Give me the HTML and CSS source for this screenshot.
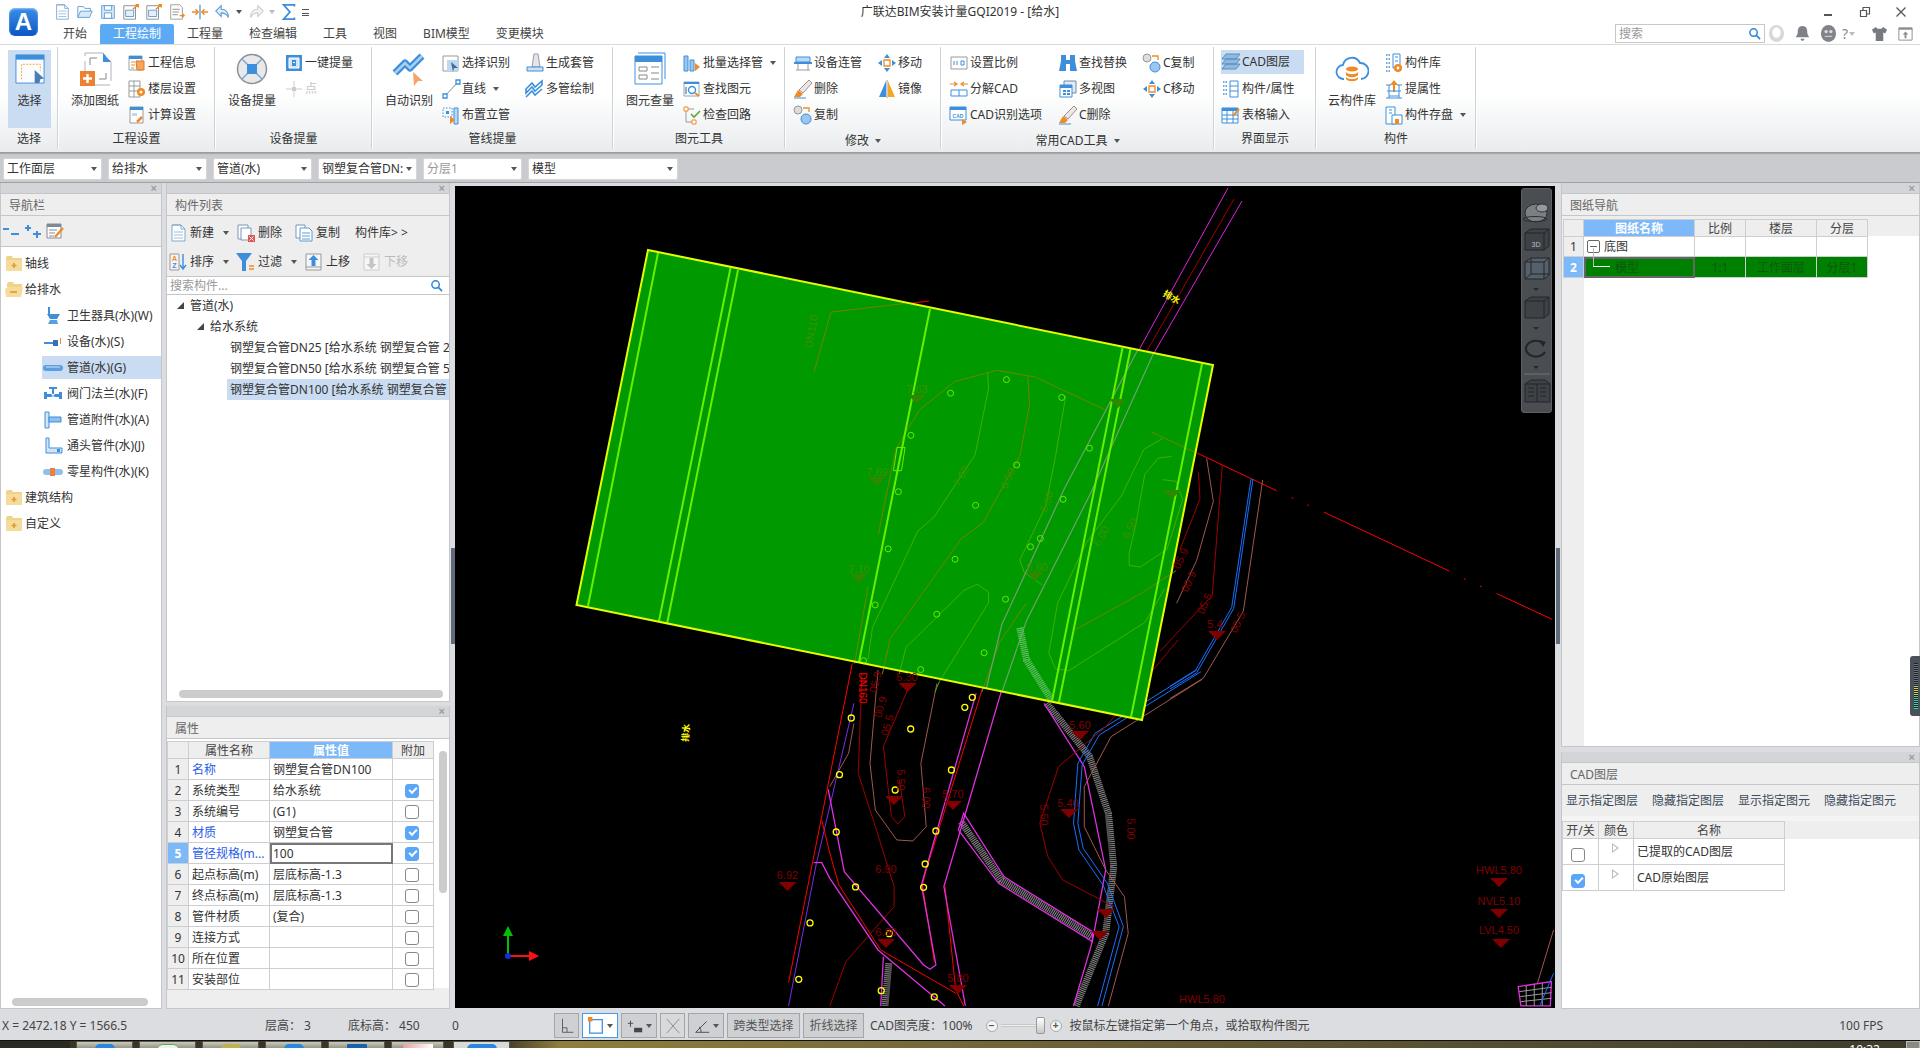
FILE: index.html
```html
<!DOCTYPE html>
<html lang="zh-CN">
<head>
<meta charset="utf-8">
<title>广联达BIM安装计量GQI2019 - [给水]</title>
<link rel="stylesheet" href="styles.css">
</head>
<body>
<svg class="defs" width="0" height="0" aria-hidden="true">
<defs>
<symbol id="i-new" viewBox="0 0 20 20"><path d="M4 2h9l4 4v12H4z" fill="#fff" stroke="#7fa9cf"/><path d="M4 2h9v4h4" fill="none" stroke="#7fa9cf"/><path d="M6 9h9M6 12h9M6 15h9" stroke="#9ac0e0"/></symbol>
<symbol id="i-open" viewBox="0 0 20 20"><path d="M2 16V4h6l2 2h6v3" fill="#fff" stroke="#5b9bd5"/><path d="M2 16l3-7h13l-3 7z" fill="#d8e9f7" stroke="#5b9bd5"/></symbol>
<symbol id="i-save" viewBox="0 0 20 20"><path d="M3 3h14v14H3z" fill="#dcebf8" stroke="#5b9bd5"/><path d="M6 3h8v5H6zM6 11h8v6H6z" fill="#fff" stroke="#5b9bd5"/></symbol>
<symbol id="i-export" viewBox="0 0 20 20"><path d="M2 3h13v15H2z" fill="#fff" stroke="#888"/><path d="M4 8h9v7H4z" fill="#e6eef6" stroke="#5b9bd5"/><path d="M12 7l6-5M15 2h3v3" fill="none" stroke="#f08a24" stroke-width="1.6"/></symbol>
<symbol id="i-ifc" viewBox="0 0 20 20"><path d="M3 2h10l3 3v13H3z" fill="#fff" stroke="#999"/><path d="M5 7h8M5 10h7M5 13h6" stroke="#888"/><path d="M13 14h5M16 12l2 2-2 2" fill="none" stroke="#f08a24" stroke-width="1.4"/></symbol>
<symbol id="i-split" viewBox="0 0 20 20"><path d="M10 2v16" stroke="#5b9bd5" stroke-width="1.5"/><path d="M1 10h6M5 7l3 3-3 3M19 10h-6M15 7l-3 3 3 3" fill="none" stroke="#f08a24" stroke-width="1.5"/></symbol>
<symbol id="i-undo" viewBox="0 0 20 20"><path d="M8 3L2 9l6 6v-4c4 0 6 1 8 5 0-6-3-9-8-9z" fill="#e3eff9" stroke="#5b9bd5" stroke-width="1.2"/></symbol>
<symbol id="i-redo" viewBox="0 0 20 20"><path d="M12 3l6 6-6 6v-4c-4 0-6 1-8 5 0-6 3-9 8-9z" fill="#f4f4f4" stroke="#ccc" stroke-width="1.2"/></symbol>
<symbol id="i-sum" viewBox="0 0 20 20"><path d="M16 4V2H4l7 8-7 8h12v-2" fill="none" stroke="#3d8fdc" stroke-width="2"/></symbol>
<symbol id="i-info" viewBox="0 0 20 20"><path d="M2 3h13v14H2z" fill="#fff" stroke="#8aa"/><path d="M2 3h13v3H2z" fill="#3d8fdc"/><path d="M4 9h4M4 12h4M4 15h3" stroke="#f08a24"/><path d="M9 8h8v9h-7z" fill="#f6a55c" stroke="#e2761d"/></symbol>
<symbol id="i-floor" viewBox="0 0 20 20"><path d="M2 2h11v16H2z" fill="#fff" stroke="#999"/><path d="M2 7h11M2 12h11M7 2v16" stroke="#999"/><circle cx="14" cy="13" r="4" fill="#f08a24"/><circle cx="14" cy="13" r="1.5" fill="#fff"/></symbol>
<symbol id="i-calc" viewBox="0 0 20 20"><path d="M3 2h13v16H3z" fill="#fff" stroke="#999"/><path d="M3 2h13v3H3z" fill="#3d8fdc"/><path d="M5 8h5v3H5z" fill="#bcd8f2"/><path d="M10 17l5-5" stroke="#f08a24" stroke-width="2.5"/></symbol>
<symbol id="i-one" viewBox="0 0 20 20"><path d="M2 2h16v16H2z" fill="#3d8fdc"/><path d="M5 5h10v10H5z" fill="#cfe4f7" stroke="#fff"/><path d="M8 7h4v6H8z" fill="#3d8fdc"/><path d="M9 9h2v1H9z" fill="#fff"/></symbol>
<symbol id="i-point" viewBox="0 0 20 20"><path d="M10 2v5M10 13v5M2 10h5M13 10h5" stroke="#ddd" stroke-width="1.4"/><circle cx="10" cy="10" r="2.5" fill="#ccc"/></symbol>
<symbol id="i-pick" viewBox="0 0 20 20"><path d="M2 3h15v15H2z" fill="#fff" stroke="#999"/><path d="M6 7h11v11H6z" fill="#bcd8f2"/><path d="M10 9l7 6-4 0-1 4z" fill="#456a96"/></symbol>
<symbol id="i-line" viewBox="0 0 20 20"><path d="M4 17L17 3" stroke="#888"/><path d="M2 15h4v4H2zM15 1h4v4h-4z" fill="#fff" stroke="#3d8fdc" stroke-width="1.3"/></symbol>
<symbol id="i-riser" viewBox="0 0 20 20"><path d="M2 3h9v9H2z" fill="none" stroke="#3d8fdc" stroke-dasharray="1.5 1.5"/><path d="M5 6h3v3H5z" fill="#3d8fdc"/><path d="M13 3h4v16h-4z" fill="#bcd8f2" stroke="#3d8fdc"/><path d="M9 11l5 4-5 4z" fill="#f08a24"/></symbol>
<symbol id="i-sleeve" viewBox="0 0 20 20"><path d="M9 1h4l2 13H7z" fill="#e4e6e8" stroke="#99a"/><path d="M2 14h16v4H2z" fill="#cfe0f0" stroke="#3d8fdc"/></symbol>
<symbol id="i-multi" viewBox="0 0 20 20"><path d="M1 10l6-6 3 4 7-6v4l-7 6-3-4-6 6zM1 18l6-6 3 4 7-6" fill="none" stroke="#3d8fdc" stroke-width="1.6"/></symbol>
<symbol id="i-batch" viewBox="0 0 20 20"><path d="M2 3h4v15H2zM8 7h4v11H8z" fill="#9cc6ee" stroke="#3d8fdc"/><path d="M13 10l5 4-5 4z" fill="#f08a24"/></symbol>
<symbol id="i-find" viewBox="0 0 20 20"><path d="M2 3h15v14H2z" fill="#fff" stroke="#8ab"/><path d="M2 3h15v2H2z" fill="#3d8fdc"/><circle cx="10" cy="11" r="3.5" fill="none" stroke="#3d8fdc" stroke-width="1.4"/><path d="M13 14l4 3" stroke="#f08a24" stroke-width="2"/><path d="M4 8v7" stroke="#9ac" stroke-width="2"/></symbol>
<symbol id="i-loop" viewBox="0 0 20 20"><path d="M4 4h8M4 4v13h6" fill="none" stroke="#999"/><path d="M2 2h4v4H2zM10 15h4v4h-4z" fill="#fff" stroke="#f08a24"/><path d="M9 9l3 3 6-6" fill="none" stroke="#5aa83a" stroke-width="1.6"/></symbol>
<symbol id="i-conn" viewBox="0 0 20 20"><path d="M3 4h14v5H3z" fill="#bcd8f2" stroke="#3d8fdc"/><path d="M1 9h18v2H1z" fill="#3d8fdc"/><path d="M5 11v6M15 11v6M3 17h14" fill="none" stroke="#99a"/></symbol>
<symbol id="i-brush" viewBox="0 0 20 20"><path d="M16 1l3 3-9 10-4-3z" fill="#e8e8e8" stroke="#a88"/><path d="M5 11l5 4-3 3H1z" fill="#f08a24"/><path d="M1 19h12" stroke="#3d8fdc"/></symbol>
<symbol id="i-copy" viewBox="0 0 20 20"><circle cx="5" cy="5" r="4" fill="#ddd" stroke="#999"/><circle cx="13" cy="14" r="5" fill="#9cc6ee" stroke="#3d8fdc"/><path d="M10 3h6v4" fill="none" stroke="#f08a24" stroke-width="1.3"/></symbol>
<symbol id="i-move" viewBox="0 0 20 20"><path d="M10 1l3 4H7zM10 19l3-4H7zM1 10l4-3v6zM19 10l-4-3v6z" fill="#3d8fdc"/><path d="M7 7h6v6H7z" fill="#fff" stroke="#f08a24" stroke-width="1.3"/></symbol>
<symbol id="i-mirror" viewBox="0 0 20 20"><path d="M9 2v16H2z" fill="#3d8fdc"/><path d="M11 2v16h7z" fill="#f5a623"/><path d="M10 1v18" stroke="#999"/></symbol>
<symbol id="i-scale" viewBox="0 0 20 20"><path d="M2 4h16v12H2z" fill="#fff" stroke="#999"/><path d="M5 8v4M8 8v4M12 8h3v4h-3z" fill="none" stroke="#3d8fdc"/></symbol>
<symbol id="i-explode" viewBox="0 0 20 20"><path d="M1 5h7M5 3L8 5 5 7M19 5h-7M15 3l-3 2 3 2" fill="none" stroke="#f08a24" stroke-width="1.2"/><path d="M2 11h16M2 11v6h16v-6M10 11v6" fill="#fff" stroke="#3d8fdc"/></symbol>
<symbol id="i-cad" viewBox="0 0 20 20"><path d="M1 2h16v13H1z" fill="#fff" stroke="#3d8fdc"/><path d="M1 2h16v3H1z" fill="#3d8fdc"/><text x="9" y="13" class="icon-text" text-anchor="middle">CAD</text><path d="M13 14l5 3-5 3z" fill="#f08a24"/></symbol>
<symbol id="i-bino" viewBox="0 0 20 20"><path d="M3 2h5v5h4V2h5v6l2 10h-7V11H8v7H1L3 8z" fill="#3d8fdc"/></symbol>
<symbol id="i-views" viewBox="0 0 20 20"><path d="M6 2h12v12H6z" fill="#dcebf8" stroke="#789"/><path d="M2 6h12v12H2z" fill="#fff" stroke="#3d8fdc"/><path d="M2 6h12v3H2z" fill="#3d8fdc"/><path d="M5 11h3v2H5zM9 11h3v2H9zM5 14h3v2H5zM9 14h3v2H9z" fill="#3d8fdc"/></symbol>
<symbol id="i-layers" viewBox="0 0 20 20"><path d="M5 2h14l-4 5H1zM5 7h14l-4 5H1zM5 12h14l-4 5H1z" fill="#8fb9de" stroke="#5b8ec0"/></symbol>
<symbol id="i-props" viewBox="0 0 20 20"><path d="M9 2h8v16H9z" fill="#fff" stroke="#3d8fdc"/><path d="M9 7h8M9 12h8" stroke="#3d8fdc"/><path d="M2 3h4M2 7h4M2 11h4M2 15h4" stroke="#3d8fdc" stroke-width="1.5" stroke-dasharray="1.5 1"/></symbol>
<symbol id="i-table" viewBox="0 0 20 20"><path d="M1 3h16v15H1z" fill="#fff" stroke="#3d8fdc"/><path d="M1 3h16v3H1z" fill="#3d8fdc"/><path d="M1 10h16M1 14h16M6 3v15M12 3v15" stroke="#3d8fdc"/><path d="M12 11l6-7" stroke="#f08a24" stroke-width="2"/></symbol>
<symbol id="i-lib" viewBox="0 0 20 20"><path d="M9 1h7v14H9z" fill="#fff" stroke="#3d8fdc"/><path d="M11 4h3M11 8h3" stroke="#3d8fdc"/><path d="M2 2h4M2 6h4M2 10h4M2 14h4M2 18h4" stroke="#3d8fdc" stroke-width="1.5" stroke-dasharray="1.5 1"/><circle cx="14" cy="15" r="4" fill="#f08a24"/><circle cx="14" cy="15" r="1.4" fill="#fff"/></symbol>
<symbol id="i-extract" viewBox="0 0 20 20"><path d="M10 1l4 5h-3v7H9V6H6z" fill="#f08a24"/><path d="M2 6h5M13 6h5M3 12h14M5 17h10M2 19h16" stroke="#3d8fdc"/><path d="M5 6v13M15 6v13" stroke="#3d8fdc"/></symbol>
<symbol id="i-store" viewBox="0 0 20 20"><path d="M2 2h9v17H2z" fill="#fff" stroke="#3d8fdc"/><path d="M5 5h3M5 8h3" stroke="#3d8fdc"/><path d="M8 10h10v9H8z" fill="#fff" stroke="#3d8fdc"/><path d="M11 14h4v5h-4z" fill="#f08a24"/></symbol>
<symbol id="i-folder-c" viewBox="0 0 20 20"><path d="M2 4l1-2h5l1 2h9v13H2z" fill="#f2d28a"/><path d="M2 6h16v11H2z" fill="#f6dc9c"/><path d="M10 9v5M7.500 11.500h5" stroke="#e09a33" stroke-width="1.6"/></symbol>
<symbol id="i-folder-o" viewBox="0 0 20 20"><path d="M3 4l1-2h5l1 2h8v3H3z" fill="#f2d28a"/><path d="M4 7h15l-2 10H2L1 9z" fill="#f6dc9c"/><path d="M6 12h7" stroke="#e09a33" stroke-width="1.6"/></symbol>
<symbol id="n-san" viewBox="0 0 20 20"><path d="M5 1h2v7H5z" fill="#3d8fdc"/><path d="M4 8h13l-3 5h-7z" fill="#3d8fdc"/><path d="M7 14h7l1 4H5z" fill="#5a9fe0"/></symbol>
<symbol id="n-dev" viewBox="0 0 20 20"><path d="M1 10h13v2H1z" fill="#3d8fdc"/><path d="M10 8h5v6h-5z" fill="#3a6fb0"/><path d="M17 6v6h1V6z" fill="#f08a24"/></symbol>
<symbol id="n-pipe" viewBox="0 0 20 20"><path d="M3 7h14a3 3 0 0 1 0 6H3a3 3 0 0 1 0-6z" fill="#5a9fe0"/><path d="M3 9h14" stroke="#cfe4f7"/></symbol>
<symbol id="n-valve" viewBox="0 0 20 20"><path d="M1 8h3v7H1zM16 8h3v7h-3z" fill="#3d8fdc"/><path d="M4 10h4l2 2 2-2h4v3h-4l-2-1-2 1H4z" fill="#3d8fdc"/><path d="M6 3h8v2h-3v5H9V5H6z" fill="#3d8fdc"/></symbol>
<symbol id="n-attach" viewBox="0 0 20 20"><path d="M2 2h4v16H2z" fill="#d3e6f7" stroke="#3d8fdc"/><path d="M6 7h12v5H6z" fill="#8fbfea" stroke="#3d8fdc"/></symbol>
<symbol id="n-tee" viewBox="0 0 20 20"><path d="M3 2h3v10h13v5H3z" fill="#d3e6f7" stroke="#3d8fdc"/><path d="M14 13h3v3h-3z" fill="#3d8fdc"/></symbol>
<symbol id="n-misc" viewBox="0 0 20 20"><path d="M3 7h14a3 3 0 0 1 0 6H3a3 3 0 0 1 0-6z" fill="#8fbfea"/><path d="M7 6h5v8H7z" fill="#e8823c"/></symbol>
<symbol id="l-del" viewBox="0 0 20 20"><path d="M2 2h10v14H2z" fill="#fff" stroke="#7a98b8"/><path d="M5 5h10v12H5z" fill="#fff" stroke="#7a98b8"/><path d="M12 12h7v7h-7z" fill="#e05454"/><path d="M13.500 13.500l4 4M17.500 13.500l-4 4" stroke="#fff"/></symbol>
<symbol id="l-copy" viewBox="0 0 20 20"><path d="M2 2h9v13H2z" fill="#fff" stroke="#7a98b8"/><path d="M6 5h9l3 3v10H6z" fill="#fff" stroke="#5b9bd5"/><path d="M8 10h8M8 13h8M8 16h8" stroke="#5b9bd5"/></symbol>
<symbol id="l-sort" viewBox="0 0 20 20"><path d="M2 2h9v16H2z" fill="#f4f4f4" stroke="#999"/><text x="6.500" y="9" class="icon-text-o" text-anchor="middle">A</text><text x="6.500" y="16" class="icon-text-b" text-anchor="middle">Z</text><path d="M15 2v14M12 13l3 4 3-4" fill="none" stroke="#3d8fdc" stroke-width="1.4"/></symbol>
<symbol id="l-filter" viewBox="0 0 20 20"><path d="M0 1h16l-6 8v10H6V9z" fill="#3d8fdc"/><path d="M13 14h5M13 17h5" stroke="#f08a24" stroke-width="1.3"/></symbol>
<symbol id="l-up" viewBox="0 0 20 20"><path d="M2 2h15v16H2z" fill="#f6f6f6" stroke="#999"/><path d="M9.500 3l5 5h-3v6h-4V8h-3z" fill="#3d8fdc"/><path d="M2 15h15" stroke="#999"/></symbol>
<symbol id="l-down" viewBox="0 0 20 20"><path d="M2 2h15v16H2z" fill="#f6f6f6" stroke="#ccc"/><path d="M9.500 17l5-5h-3V6h-4v6h-3z" fill="#c4c4c4"/><path d="M2 5h15" stroke="#ccc"/></symbol>
</defs>
</svg>

<div class="app">
  <header class="top">
    <div class="logo"><span>A</span></div>
    <div class="title-row">
      <div class="qat">
        <svg class="ic q"><use href="#i-new"/></svg>
        <svg class="ic q"><use href="#i-open"/></svg>
        <svg class="ic q"><use href="#i-save"/></svg>
        <svg class="ic q"><use href="#i-export"/></svg>
        <svg class="ic q"><use href="#i-export"/></svg>
        <svg class="ic q"><use href="#i-ifc"/></svg>
        <svg class="ic q"><use href="#i-split"/></svg>
        <svg class="ic q"><use href="#i-undo"/></svg>
        <i class="caret qc"></i>
        <svg class="ic q"><use href="#i-redo"/></svg>
        <i class="caret qc dim"></i>
        <svg class="ic q"><use href="#i-sum"/></svg>
        <span class="qmore"></span>
      </div>
      <div class="app-title">广联达BIM安装计量GQI2019 - [给水]</div>
      <div class="winctl">
        <svg class="wbtn" viewBox="0 0 12 12"><path d="M1 8h8v2H1z" fill="#555"/></svg>
        <svg class="wbtn" viewBox="0 0 12 12"><path d="M1.500 4.500h6v6h-6zM4 4V1.500h6.500V8H8" fill="none" stroke="#555" stroke-width="1.2"/></svg>
        <svg class="wbtn" viewBox="0 0 12 12"><path d="M1.500 1.500l9 9M10.500 1.500l-9 9" stroke="#555" stroke-width="1.3"/></svg>
      </div>
    </div>
    <nav class="tab-row">
      <span class="tab">开始</span>
      <span class="tab active">工程绘制</span>
      <span class="tab">工程量</span>
      <span class="tab">检查编辑</span>
      <span class="tab">工具</span>
      <span class="tab">视图</span>
      <span class="tab">BIM模型</span>
      <span class="tab">变更模块</span>
      <div class="top-right">
        <div class="top-search"><span>搜索</span><svg class="mag" viewBox="0 0 14 14"><circle cx="6" cy="6" r="4" fill="none" stroke="#2a86d8" stroke-width="1.6"/><path d="M9 9l4 4" stroke="#2a86d8" stroke-width="1.8"/></svg></div>
        <div class="top-icons">
          <svg class="ti" viewBox="0 0 18 18"><ellipse cx="9" cy="9" rx="8" ry="9" fill="#d8d8d8"/><ellipse cx="9" cy="8" rx="4.500" ry="5.500" fill="#fff"/></svg>
          <svg class="ti" viewBox="0 0 18 18"><path d="M9 1c-4 0-5 3-5 6 0 4-2 5-2 6h14c0-1-2-2-2-6 0-3-1-6-5-6zM7 14.500h4c0 3-4 3-4 0z" fill="#7f8388"/></svg>
          <svg class="ti" viewBox="0 0 18 18"><ellipse cx="9" cy="9" rx="8" ry="9" fill="#80848a"/><circle cx="6.500" cy="7" r="1.800" fill="#ddd"/><circle cx="11.500" cy="7" r="1.800" fill="#ddd"/><path d="M5 12h8" stroke="#ddd"/></svg>
          <span class="help">?<i class="caret dim"></i></span>
          <svg class="ti shirt" viewBox="0 0 18 18"><path d="M5 2L1 5l2 4 2-1v9h8V8l2 1 2-4-4-3-2 2H7z" fill="#777b80"/></svg>
          <svg class="ti" viewBox="0 0 18 18"><path d="M2 3h14v13H2z" fill="#fff" stroke="#8a8e92"/><path d="M2 3h14v2H2z" fill="#8a8e92"/><path d="M9 7l3 3h-2v4H8v-4H6z" fill="#8a8e92"/></svg>
        </div>
      </div>
    </nav>
  </header>

  <section class="ribbon">
    <div class="group g1">
      <div class="group-body">
        <div class="big sel-big">
          <svg class="bigic" viewBox="0 0 32 32"><path d="M1 1h30v30H1z" fill="#fafcff" stroke="#3d8fdc"/><path d="M1 1h30v5H1z" fill="#3d8fdc"/><path d="M7 27V11h20v7" fill="none" stroke="#f5a623" stroke-dasharray="2 1.500"/><path d="M21 17l10 9-4 1-1 4h-5z" fill="#4c7db2"/></svg>
          <span>选择</span>
        </div>
      </div>
      <div class="group-label">选择</div>
    </div>
    <div class="group g2">
      <div class="group-body">
        <div class="big">
          <svg class="bigic" viewBox="0 0 34 34"><path d="M7 1h18l8 9v23H7z" fill="#fff" stroke="#a9b4c0" stroke-dasharray="22 5"/><path d="M25 1l8 9h-8z" fill="#3d8fdc"/><path d="M12 6v7M12 6h7M28 27h-7M28 27v-6" fill="none" stroke="#888"/><path d="M2 19h15v15H2z" fill="#ee8032"/><path d="M9.500 22v9M5 26.500h9" stroke="#fff" stroke-width="2.400"/></svg>
          <span>添加图纸</span>
        </div>
        <div class="col">
          <div class="item"><svg class="ic"><use href="#i-info"/></svg>工程信息</div>
          <div class="item"><svg class="ic"><use href="#i-floor"/></svg>楼层设置</div>
          <div class="item"><svg class="ic"><use href="#i-calc"/></svg>计算设置</div>
        </div>
      </div>
      <div class="group-label">工程设置</div>
    </div>
    <div class="group g3">
      <div class="group-body">
        <div class="big">
          <svg class="bigic" viewBox="0 0 34 34"><circle cx="17" cy="17" r="14.500" fill="#e8e9ea" stroke="#8e9296" stroke-width="1.500"/><path d="M7 7l20 20M27 7L7 27" stroke="#7ea9d2" stroke-width="1.500"/><path d="M12 12h10v10H12z" fill="#3d8fdc"/></svg>
          <span>设备提量</span>
        </div>
        <div class="col">
          <div class="item"><svg class="ic"><use href="#i-one"/></svg>一键提量</div>
          <div class="item off"><svg class="ic"><use href="#i-point"/></svg>点</div>
        </div>
      </div>
      <div class="group-label">设备提量</div>
    </div>
    <div class="group g4">
      <div class="group-body">
        <div class="big">
          <svg class="bigic" viewBox="0 0 34 34"><path d="M3 21l10-10 5 5L30 4" fill="none" stroke="#3d8fdc" stroke-width="7" stroke-linejoin="round"/><path d="M3 21l10-10 5 5L30 4" fill="none" stroke="#a9d0f2" stroke-width="2.500"/><path d="M21 20l10 9-5 0-4 5z" fill="#f6a26b"/></svg>
          <span>自动识别</span>
        </div>
        <div class="col w84">
          <div class="item"><svg class="ic"><use href="#i-pick"/></svg>选择识别</div>
          <div class="item"><svg class="ic"><use href="#i-line"/></svg>直线<i class="caret"></i></div>
          <div class="item"><svg class="ic"><use href="#i-riser"/></svg>布置立管</div>
        </div>
        <div class="col">
          <div class="item"><svg class="ic"><use href="#i-sleeve"/></svg>生成套管</div>
          <div class="item"><svg class="ic"><use href="#i-multi"/></svg>多管绘制</div>
        </div>
      </div>
      <div class="group-label">管线提量</div>
    </div>
    <div class="group g5">
      <div class="group-body">
        <div class="big">
          <svg class="bigic" viewBox="0 0 34 34"><path d="M5 1h27v26" fill="none" stroke="#3d8fdc"/><path d="M2 4h27v28H2z" fill="#fff" stroke="#3d8fdc"/><path d="M2 4h27v6H2z" fill="#3d8fdc"/><path d="M6 15h8v4H6zM6 23h8v4H6zM18 15h8M18 21h8M18 27h8" fill="none" stroke="#888"/></svg>
          <span>图元查量</span>
        </div>
        <div class="col">
          <div class="item"><svg class="ic"><use href="#i-batch"/></svg>批量选择管<i class="caret"></i></div>
          <div class="item"><svg class="ic"><use href="#i-find"/></svg>查找图元</div>
          <div class="item"><svg class="ic"><use href="#i-loop"/></svg>检查回路</div>
        </div>
      </div>
      <div class="group-label">图元工具</div>
    </div>
    <div class="group g6">
      <div class="group-body">
        <div class="col w84">
          <div class="item"><svg class="ic"><use href="#i-conn"/></svg>设备连管</div>
          <div class="item"><svg class="ic"><use href="#i-brush"/></svg>删除</div>
          <div class="item"><svg class="ic"><use href="#i-copy"/></svg>复制</div>
        </div>
        <div class="col">
          <div class="item"><svg class="ic"><use href="#i-move"/></svg>移动</div>
          <div class="item"><svg class="ic"><use href="#i-mirror"/></svg>镜像</div>
        </div>
      </div>
      <div class="group-label drop">修改<i class="caret"></i></div>
    </div>
    <div class="group g7">
      <div class="group-body">
        <div class="col w109">
          <div class="item"><svg class="ic"><use href="#i-scale"/></svg>设置比例</div>
          <div class="item"><svg class="ic"><use href="#i-explode"/></svg>分解CAD</div>
          <div class="item"><svg class="ic"><use href="#i-cad"/></svg>CAD识别选项</div>
        </div>
        <div class="col w84">
          <div class="item"><svg class="ic"><use href="#i-bino"/></svg>查找替换</div>
          <div class="item"><svg class="ic"><use href="#i-views"/></svg>多视图</div>
          <div class="item"><svg class="ic"><use href="#i-brush"/></svg>C删除</div>
        </div>
        <div class="col">
          <div class="item"><svg class="ic"><use href="#i-copy"/></svg>C复制</div>
          <div class="item"><svg class="ic"><use href="#i-move"/></svg>C移动</div>
        </div>
      </div>
      <div class="group-label drop">常用CAD工具<i class="caret"></i></div>
    </div>
    <div class="group g8">
      <div class="group-body">
        <div class="col">
          <div class="item on"><svg class="ic"><use href="#i-layers"/></svg>CAD图层</div>
          <div class="item"><svg class="ic"><use href="#i-props"/></svg>构件/属性</div>
          <div class="item"><svg class="ic"><use href="#i-table"/></svg>表格输入</div>
        </div>
      </div>
      <div class="group-label">界面显示</div>
    </div>
    <div class="group g9">
      <div class="group-body">
        <div class="big">
          <svg class="bigic" viewBox="0 0 34 34"><path d="M9 27a7 7 0 0 1-1-14 9 9 0 0 1 17-2 8 8 0 0 1 1 16" fill="#fff" stroke="#3d8fdc" stroke-width="1.800"/><ellipse cx="17" cy="17" rx="6" ry="2.500" fill="#f08a24"/><path d="M11 20c2 3 10 3 12 0v3c-2 3-10 3-12 0zM11 25c2 3 10 3 12 0v2c-2 3-10 3-12 0z" fill="#f08a24"/></svg>
          <span>云构件库</span>
        </div>
        <div class="col">
          <div class="item"><svg class="ic"><use href="#i-lib"/></svg>构件库</div>
          <div class="item"><svg class="ic"><use href="#i-extract"/></svg>提属性</div>
          <div class="item"><svg class="ic"><use href="#i-store"/></svg>构件存盘<i class="caret"></i></div>
        </div>
      </div>
      <div class="group-label">构件</div>
    </div>
  </section>

  <div class="select-bar">
    <div class="sel"><span>工作面层</span><i class="caret"></i></div>
    <div class="sel"><span>给排水</span><i class="caret"></i></div>
    <div class="sel"><span>管道(水)</span><i class="caret"></i></div>
    <div class="sel"><span>钢塑复合管DN:</span><i class="caret"></i></div>
    <div class="sel dis"><span>分层1</span><i class="caret"></i></div>
    <div class="sel wide"><span>模型</span><i class="caret"></i></div>
  </div>

  <main class="main">
    <aside class="panel nav">
      <div class="strip"><span class="x">×</span></div>
      <div class="ptitle">导航栏</div>
      <div class="nav-tools">
        <svg class="ic" viewBox="0 0 20 20"><path d="M2 7h6v2H2zM10 12h8v2h-8z" fill="#3d8fdc"/></svg>
        <svg class="ic" viewBox="0 0 20 20"><path d="M4 4h2v2h2v2H6v2H4V8H2V6h2zM13 10h2v2h3v2h-3v3h-2v-3h-3v-2h3z" fill="#3d8fdc"/></svg>
        <svg class="ic" viewBox="0 0 20 20"><path d="M2 3h14v14H2z" fill="#fff" stroke="#889"/><path d="M2 3h14v3H2z" fill="#7c8a98"/><path d="M4 9h8M4 12h6M4 15h5" stroke="#889"/><path d="M10 16l8-9" stroke="#f08a24" stroke-width="2.400"/></svg>
      </div>
      <div class="nav-tree">
        <div class="nrow"><svg class="ic"><use href="#i-folder-c"/></svg>轴线</div>
        <div class="nrow"><svg class="ic"><use href="#i-folder-o"/></svg>给排水</div>
        <div class="nrow child"><svg class="ic"><use href="#n-san"/></svg>卫生器具(水)(W)</div>
        <div class="nrow child"><svg class="ic"><use href="#n-dev"/></svg>设备(水)(S)</div>
        <div class="nrow child cur"><svg class="ic"><use href="#n-pipe"/></svg>管道(水)(G)</div>
        <div class="nrow child"><svg class="ic"><use href="#n-valve"/></svg>阀门法兰(水)(F)</div>
        <div class="nrow child"><svg class="ic"><use href="#n-attach"/></svg>管道附件(水)(A)</div>
        <div class="nrow child"><svg class="ic"><use href="#n-tee"/></svg>通头管件(水)(J)</div>
        <div class="nrow child"><svg class="ic"><use href="#n-misc"/></svg>零星构件(水)(K)</div>
        <div class="nrow"><svg class="ic"><use href="#i-folder-c"/></svg>建筑结构</div>
        <div class="nrow"><svg class="ic"><use href="#i-folder-c"/></svg>自定义</div>
      </div>
      <div class="hscroll nav-scroll"></div>
    </aside>

    <div class="mid">
      <section class="panel list">
        <div class="strip"><span class="x">×</span></div>
        <div class="ptitle">构件列表</div>
        <div class="tools first">
          <div class="tool t68"><svg class="ic"><use href="#i-new"/></svg>新建<i class="caret"></i></div>
          <div class="tool t58"><svg class="ic"><use href="#l-del"/></svg>删除</div>
          <div class="tool t61"><svg class="ic"><use href="#l-copy"/></svg>复制</div>
          <div class="tool">构件库&gt; &gt;</div>
        </div>
        <div class="tools">
          <div class="tool t68"><svg class="ic"><use href="#l-sort"/></svg>排序<i class="caret"></i></div>
          <div class="tool t68"><svg class="ic"><use href="#l-filter"/></svg>过滤<i class="caret"></i></div>
          <div class="tool t58"><svg class="ic"><use href="#l-up"/></svg>上移</div>
          <div class="tool off"><svg class="ic"><use href="#l-down"/></svg>下移</div>
        </div>
        <div class="list-search"><span>搜索构件...</span><svg class="mag" viewBox="0 0 14 14"><circle cx="6" cy="6" r="4" fill="none" stroke="#2a86d8" stroke-width="1.600"/><path d="M9 9l4 4" stroke="#2a86d8" stroke-width="1.800"/></svg></div>
        <div class="list-tree">
          <div class="lrow l1"><i class="tri"></i>管道(水)</div>
          <div class="lrow l2"><i class="tri"></i>给水系统</div>
          <div class="lrow l3">钢塑复合管DN25 [给水系统 钢塑复合管 25]</div>
          <div class="lrow l3">钢塑复合管DN50 [给水系统 钢塑复合管 50]</div>
          <div class="lrow l3 cur">钢塑复合管DN100 [给水系统 钢塑复合管 100]</div>
        </div>
        <div class="hscroll list-scroll"></div>
      </section>

      <section class="panel props">
        <div class="strip"><span class="x">×</span></div>
        <div class="ptitle">属性</div>
        <div class="props-body">
          <table class="grid ptable">
            <colgroup><col class="c-n"><col class="c-name"><col class="c-val"><col class="c-ext"></colgroup>
            <thead><tr class="hr"><th></th><th>属性名称</th><th class="hot">属性值</th><th>附加</th></tr></thead>
            <tbody>
              <tr><td class="n">1</td><td class="blue">名称</td><td>钢塑复合管DN100</td><td></td></tr>
              <tr><td class="n">2</td><td>系统类型</td><td>给水系统</td><td class="cc"><i class="cb on"></i></td></tr>
              <tr><td class="n">3</td><td>系统编号</td><td>(G1)</td><td class="cc"><i class="cb"></i></td></tr>
              <tr><td class="n">4</td><td class="blue">材质</td><td>钢塑复合管</td><td class="cc"><i class="cb on"></i></td></tr>
              <tr><td class="n hotn">5</td><td class="blue">管径规格(m...</td><td class="edit">100</td><td class="cc"><i class="cb on"></i></td></tr>
              <tr><td class="n">6</td><td>起点标高(m)</td><td>层底标高-1.3</td><td class="cc"><i class="cb"></i></td></tr>
              <tr><td class="n">7</td><td>终点标高(m)</td><td>层底标高-1.3</td><td class="cc"><i class="cb"></i></td></tr>
              <tr><td class="n">8</td><td>管件材质</td><td>(复合)</td><td class="cc"><i class="cb"></i></td></tr>
              <tr><td class="n">9</td><td>连接方式</td><td></td><td class="cc"><i class="cb"></i></td></tr>
              <tr><td class="n">10</td><td>所在位置</td><td></td><td class="cc"><i class="cb"></i></td></tr>
              <tr><td class="n">11</td><td>安装部位</td><td></td><td class="cc"><i class="cb"></i></td></tr>
            </tbody>
          </table>
          <div class="vscroll"></div>
        </div>
      </section>
    </div>

    <div class="split"><i class="grip"></i></div>

    <section class="canvas">
      <svg class="cad" width="1100" height="822" viewBox="455 186 1100 822">
        <defs>
          <ellipse id="y9" rx="5.600" ry="9" class="yc"/>
          <ellipse id="g8" rx="6.700" ry="8.400" class="gc"/>
          <path id="tri" d="M-9-4H9L0 5z" class="tri-red"/>
          <path id="trd" d="M-9-4H9L0 5z" class="tri-dim"/>
        </defs>
        <!-- drawing outside the green sheet -->
        <g transform="translate(720 640) scale(.5357 .3333)">
          <polyline class="red" points="247,70 128,1028"/>
          <polyline class="pur" points="250,190 180,670 128,1098"/>
          <polyline class="brn" points="250,250 240,340 205,440"/>
          <polyline class="red" points="190,540 205,640 222,735 300,930 440,1060"/>
          <polyline class="red" points="490,145 385,690 378,735 400,965"/>
          <polyline class="red" points="420,740 440,1050 455,1098"/>
          <polyline class="dred" points="265,100 258,400 290,560 325,740 325,800 235,965 205,1098"/>
          <polyline class="brn" points="295,90 280,370 290,510 330,600 360,603 385,560 375,370 405,130"/>
          <polyline class="dred" points="350,150 305,320 320,530 332,552 345,530 335,420"/>
          <polyline class="hatch" points="450,545 525,720 695,890"/>
          <polyline class="hatch" points="610,190 690,350 725,520 735,680 720,880 665,1098"/>
          <polyline class="hatch" points="315,970 308,1098"/>
          <polyline class="mag" points="202,448 232,695 380,975 392,988 403,975 376,735 478,160"/>
          <polyline class="mag" points="175,668 190,668 205,715 295,930 420,1098"/>
          <polyline class="mag" points="525,155 418,740 458,1098"/>
          <polygon class="mag" points="455,520 530,710 695,875 695,905 520,730 445,570"/>
          <polyline class="mag" points="605,190 680,380 720,690 695,905 660,1098"/>
          <polyline class="mag" points="305,950 300,1098"/>
          <polyline class="blu" points="890,90 700,280 668,370 660,550 670,630 715,735 745,860 705,1098"/>
          <polyline class="blu" points="898,95 708,285 676,375 668,550 678,625 723,730 753,860 713,1098"/>
          <polyline class="brn" points="900,118 730,290 680,440 680,560 720,690 755,770 762,880 725,1098"/>
          <polyline class="dred" points="855,0 720,260 632,380 597,550 612,650 640,720 735,800"/>
          <polygon class="mag" points="1490,1040 1552,1025 1550,1098 1495,1098"/>
          <path class="gry" d="M1492 1055L1552 1042M1494 1070L1552 1058M1495 1085L1552 1075M1505 1038V1098M1520 1034V1098M1535 1030V1098"/>
          <polyline class="blu" points="1556,1000 1530,1098"/>
          <polyline class="brn" points="1556,870 1526,1030"/>
          <use href="#y9" x="471" y="172"/><use href="#y9" x="457" y="202"/><use href="#y9" x="245" y="234"/><use href="#y9" x="356" y="267"/>
          <use href="#y9" x="223" y="404"/><use href="#y9" x="432" y="390"/><use href="#y9" x="327" y="450"/><use href="#y9" x="217" y="576"/>
          <use href="#y9" x="403" y="573"/><use href="#y9" x="383" y="672"/><use href="#y9" x="253" y="741"/><use href="#y9" x="380" y="742"/>
          <use href="#y9" x="168" y="849"/><use href="#y9" x="316" y="881"/><use href="#y9" x="147" y="1018"/><use href="#y9" x="301" y="1052"/><use href="#y9" x="400" y="1071"/>
        </g>
        <g transform="translate(1180 180) scale(.3333 .5357)">
          <polyline class="red" points="52,510 290,580"/>
          <polyline class="red" points="335,593 340,594"/><polyline class="red" points="381,606 386,608"/>
          <polyline class="red" points="432,620 808,730"/>
          <polyline class="red" points="852,744 857,746"/><polyline class="red" points="900,758 905,759"/>
          <polyline class="red" points="950,772 1116,820"/>
          <polyline class="blu" points="213,558 155,798 47,915 -30,945"/>
          <polyline class="blu" points="219,558 161,800 50,920 -30,950"/>
          <polyline class="brn" points="248,560 190,805 70,930 -30,968"/>
          <polyline class="dred" points="127,532 97,775 -60,880"/>
          <polyline class="brn" points="80,520 100,600 50,710 -10,790"/>
          <polyline class="dred" points="55,545 60,595 0,690"/>
        </g>
        <polyline class="mag-t" points="1228,188 1139,350"/>
        <polyline class="dred-t" points="1234,199 1147,351"/>
        <polyline class="mag-t" points="1242,201 1154,353"/>
        <polyline class="red-t" points="929,301 913,303"/>

        <!-- green sheet -->
        <polygon class="sheet" points="648,250 1213,365 1142,720 576.500,605"/>
        <g transform="translate(560 185) scale(.4464 .3571)">
          <polyline class="d1" points="770,332 607,356 569,525"/>
          <polyline class="d1" points="713,978 752,740 805,630 885,550 978,519 1065,538 1225,632"/>
          <polyline class="d1" points="1325,692 1425,750"/>
          <polyline class="d2" points="958,525 960,570 930,755 838,930 802,968 700,1240 690,1330"/>
          <polyline class="d1" points="1048,535 1052,615 1030,760 948,945 898,992 740,1270 722,1370"/>
          <polyline class="d2" points="1133,590 1110,760 1088,900 1030,1050 1040,1085 1080,1120"/>
          <polyline class="d1" points="1045,1170 985,1280 945,1420"/>
          <polyline class="d2" points="760,1370 775,1295 905,1135 935,1118 960,1140 960,1170 850,1390 840,1420"/>
          <polyline class="d2" points="1350,710 1308,740 1258,870 1180,1000 1115,1170 1095,1310 1110,1355 1140,1360 1310,1225 1355,1130"/>
          <polyline class="d2" points="1370,760 1340,765 1310,810 1290,950 1275,1030 1275,1065 1300,1070 1360,1020 1395,880 1380,830 1350,825"/>
          <polyline class="d1" points="1380,1080 1300,1145 1155,1245"/>
          <polyline class="d1" points="690,1125 660,1340"/>
          <polyline class="d3" points="1330,470 1190,860 1045,1220 990,1420"/>
          <polyline class="d3" points="1295,460 1130,850 990,1230 955,1410"/>
          <polyline class="hatch-g" points="1030,1240 1045,1330 1100,1440"/>
          <path class="bright" d="M755 735l18 0-8 65-18 0z"/>
          <use href="#g8" x="875" y="583"/><use href="#g8" x="1000" y="545"/><use href="#g8" x="1124" y="595"/><use href="#g8" x="786" y="701"/>
          <use href="#g8" x="1186" y="737"/><use href="#g8" x="1023" y="784"/><use href="#g8" x="758" y="859"/><use href="#g8" x="1127" y="880"/>
          <use href="#g8" x="931" y="897"/><use href="#g8" x="1076" y="990"/><use href="#g8" x="1054" y="1013"/><use href="#g8" x="735" y="1019"/>
          <use href="#g8" x="885" y="1048"/><use href="#g8" x="706" y="1176"/><use href="#g8" x="998" y="1160"/><use href="#g8" x="844" y="1202"/>
          <use href="#g8" x="950" y="1310"/><use href="#g8" x="680" y="1332"/><use href="#g8" x="808" y="1357"/>
        </g>
        <path class="lime" d="M658 253L588 606M730.500 268L659 621M738 270L667 624M930 309L859 662M1122.500 348L1052 701M1130.500 349L1059 702M1202 364L1131 717"/>
        <polygon class="sheet-edge" points="648,250 1213,365 1142,720 576.500,605"/>

        <use href="#trd" x="917" y="399"/><use href="#trd" x="877" y="481"/><use href="#trd" x="859" y="578"/>
        <use href="#trd" x="1035" y="576"/><use href="#trd" x="1172" y="494"/><use href="#trd" x="1118" y="403"/>
        <text class="t-dim" x="877" y="476" text-anchor="middle">7.69</text>
        <text class="t-dim" x="859" y="573" text-anchor="middle">7.10</text>
        <text class="t-dim" x="917" y="393" text-anchor="middle">7.63</text>
        <text class="t-dim" x="1037" y="571" text-anchor="middle">6.60</text>
        <text class="t-dim" transform="translate(964 478) rotate(-60)" text-anchor="middle">7.00</text>
        <text class="t-dim" transform="translate(1011 480) rotate(-65)" text-anchor="middle">6.50</text>
        <text class="t-dim" transform="translate(1050 503) rotate(-70)" text-anchor="middle">6.00</text>
        <text class="t-dim" transform="translate(1104 538) rotate(-60)" text-anchor="middle">6.00</text>
        <text class="t-dim" transform="translate(1133 530) rotate(-65)" text-anchor="middle">6.50</text>
        <text class="t-dim" transform="translate(815 332) rotate(-80)" text-anchor="middle">DN110</text>

        <use href="#tri" x="787.500" y="886"/><use href="#tri" x="1499" y="882"/><use href="#tri" x="1499" y="913"/><use href="#tri" x="1501" y="943"/>
        <use href="#tri" x="1080" y="735"/><use href="#tri" x="1069" y="813"/><use href="#tri" x="894" y="800"/><use href="#tri" x="953" y="805"/>
        <use href="#tri" x="907.500" y="687"/><use href="#tri" x="886" y="943"/><use href="#tri" x="958" y="989"/><use href="#tri" x="1106" y="913"/>
        <use href="#tri" x="1100" y="935"/><use href="#tri" x="1217" y="635"/>
        <text class="t-red" x="787.500" y="879" text-anchor="middle">6.92</text>
        <text class="t-red" x="886" y="873" text-anchor="middle">6.90</text>
        <text class="t-red" x="1499" y="874" text-anchor="middle">HWL5.80</text>
        <text class="t-red" x="1499" y="905" text-anchor="middle">NVL5.10</text>
        <text class="t-red" x="1499" y="934" text-anchor="middle">LVL4.50</text>
        <text class="t-red" x="1202" y="1003" text-anchor="middle">HWL5.80</text>
        <text class="t-red" x="1080" y="729" text-anchor="middle">5.60</text>
        <text class="t-red" x="1068" y="807" text-anchor="middle">5.40</text>
        <text class="t-red" x="1215" y="628" text-anchor="middle">5.4</text>
        <text class="t-red" x="953" y="798" text-anchor="middle">5.70</text>
        <text class="t-red" x="958" y="982" text-anchor="middle">5.80</text>
        <text class="t-red" x="907" y="681" text-anchor="middle">5.30</text>
        <text class="t-red" x="886" y="936" text-anchor="middle">6.80</text>
        <text class="t-red" transform="translate(1127 829) rotate(90)" text-anchor="middle">5.00</text>
        <text class="t-red" transform="translate(1040 815) rotate(90)" text-anchor="middle">5.50</text>
        <text class="t-red" transform="translate(897 780) rotate(90)" text-anchor="middle">5.50</text>
        <text class="t-red" transform="translate(922 798) rotate(90)" text-anchor="middle">6.00</text>
        <text class="t-red" transform="translate(1184 560) rotate(-65)" text-anchor="middle">05.9</text>
        <text class="t-red" transform="translate(1192 583) rotate(-65)" text-anchor="middle">00.9</text>
        <text class="t-red" transform="translate(1208 605) rotate(-65)" text-anchor="middle">05.5</text>
        <text class="t-red" transform="translate(1241 624) rotate(-65)" text-anchor="middle">00.5</text>
        <text class="t-red" transform="translate(879 683) rotate(-75)" text-anchor="middle">05.9</text>
        <text class="t-red" transform="translate(884 708) rotate(-75)" text-anchor="middle">00.9</text>
        <text class="t-red" transform="translate(891 726) rotate(-75)" text-anchor="middle">05.5</text>
        <text class="t-bright" transform="translate(859 688) rotate(90)" text-anchor="middle">DN160</text>
        <text class="t-yel" transform="translate(1170 300) rotate(30)" text-anchor="middle">排水</text>
        <text class="t-yel" transform="translate(689 733) rotate(-85)" text-anchor="middle">排水</text>

        <path class="ax-g" d="M508 956V934"/><path d="M508 926l-5 10h10z" class="ax-gf"/>
        <path class="ax-r" d="M508 956H530"/><path d="M539 956l-10-5v10z" class="ax-rf"/>
        <circle cx="508" cy="956" r="3" class="ax-b"/>
      </svg>

      <div class="viewcube">
        <svg width="31" height="225" viewBox="0 0 31 225">
          <ellipse cx="15" cy="25" rx="11" ry="9" fill="#7c8084" stroke="#2c2f32"/><ellipse cx="21" cy="20" rx="6" ry="4" fill="#95999d" stroke="#2c2f32"/><ellipse cx="14" cy="31" rx="12" ry="2.500" fill="none" stroke="#2c2f32"/>
          <path d="M4 45l6-4h18v17l-5 4H4zM4 45h19v17M23 45l5-4" fill="#3e4246" stroke="#22262a"/>
          <text x="15" y="59" class="cube-t" text-anchor="middle">3D</text>
          <path d="M4 74l6-4h18v17l-5 4H4zM4 74h19v17M23 74l5-4" fill="#55606a" stroke="#22262a"/><path d="M10 70v16h18M10 86l-6 5" fill="none" stroke="#22262a"/>
          <path d="M12 100h6l-3 3z" fill="#26292c"/>
          <path d="M4 113l6-4h18v17l-5 4H4zM4 113h19v17M23 113l5-4" fill="#3e4246" stroke="#22262a"/>
          <path d="M12 139h6l-3 3z" fill="#26292c"/>
          <path d="M24 164a10 8 0 1 1-2-9" fill="none" stroke="#22262a" stroke-width="2"/><path d="M18 152l7 2-3 5z" fill="#22262a"/>
          <path d="M12 178h6l-3 3z" fill="#26292c"/>
          <path d="M3 186h26" stroke="#70757a"/>
          <path d="M4 196l6-4h14l5 4v18H4z" fill="#3e4246" stroke="#22262a"/><path d="M4 196h25M16 196v18M7 200h6M7 204h6M7 208h6M19 200h6M19 204h6M19 208h6" fill="none" stroke="#22262a"/>
        </svg>
      </div>
    </section>

    <div class="split right-split"><i class="grip"></i></div>

    <aside class="right">
      <section class="panel dwg">
        <div class="strip"><span class="x">×</span></div>
        <div class="ptitle">图纸导航</div>
        <div class="dwg-body">
          <table class="grid dtable">
            <colgroup><col class="d-n"><col class="d-name"><col class="d-s"><col class="d-f"><col class="d-l"></colgroup>
            <thead><tr class="hr"><th></th><th class="hot">图纸名称</th><th>比例</th><th>楼层</th><th>分层</th></tr></thead>
            <tbody>
              <tr class="r1"><td class="n">1</td><td class="tree-cell"><i class="minus"></i>底图</td><td></td><td></td><td></td></tr>
              <tr class="r2"><td class="n hotn">2</td><td class="model"><span>模型</span></td><td class="ctr">1:1</td><td class="ctr">工作面层</td><td class="ctr">分层1</td></tr>
            </tbody>
          </table>
        </div>
        <div class="side-tab"><i></i></div>
      </section>
      <section class="panel layers">
        <div class="strip"><span class="x">×</span></div>
        <div class="ptitle">CAD图层</div>
        <div class="layer-tools"><span>显示指定图层</span><span>隐藏指定图层</span><span>显示指定图元</span><span>隐藏指定图元</span></div>
        <div class="layer-body">
          <table class="grid ltable">
            <colgroup><col class="e-a"><col class="e-b"><col class="e-c"></colgroup>
            <thead><tr class="hr"><th>开/关</th><th>颜色</th><th>名称</th></tr></thead>
            <tbody>
              <tr><td class="cc"><i class="cb"></i></td><td class="cc"><i class="play"></i></td><td>已提取的CAD图层</td></tr>
              <tr><td class="cc"><i class="cb on"></i></td><td class="cc"><i class="play"></i></td><td>CAD原始图层</td></tr>
            </tbody>
          </table>
        </div>
      </section>
    </aside>
  </main>

  <footer class="status">
    <span class="st st-xy">X = 2472.18 Y = 1566.5</span>
    <span class="st st-fh">层高： 3</span>
    <span class="st st-bh">底标高： 450</span>
    <span class="st st-z">0</span>
    <div class="st-tools">
      <span class="sbtn s1"><svg viewBox="0 0 20 20"><path d="M5 2v15h12M5 12h5v5" fill="none" stroke="#555"/></svg></span>
      <span class="sbtn s2 act"><svg viewBox="0 0 20 20"><path d="M3 3h14v15H3z" fill="#fff" stroke="#3d8fdc" stroke-width="1.400"/><path d="M1 0h5v5H1z" fill="#f08a24"/></svg><i class="caret"></i></span>
      <span class="sbtn s2"><svg viewBox="0 0 20 20"><path d="M5 4v7M2 7h6" stroke="#444"/><path d="M9 12h9v5H9z" fill="#444"/></svg><i class="caret"></i></span>
      <span class="sbtn s1 dis"><svg viewBox="0 0 20 20"><path d="M3 2l14 16M17 2L3 18" stroke="#888"/></svg></span>
      <span class="sbtn s2"><svg viewBox="0 0 20 20"><path d="M3 17h15M3 17L15 5M9 17a9 9 0 0 0-2-6" fill="none" stroke="#444"/></svg><i class="caret"></i></span>
      <span class="sbtn txt b1">跨类型选择</span>
      <span class="sbtn txt b2">折线选择</span>
      <span class="bright-l">CAD图亮度：100%</span>
      <div class="slider">
        <i class="sl-b">−</i>
        <span class="track"><i class="thumb"></i></span>
        <i class="sl-b plus">+</i>
      </div>
      <span class="hint">按鼠标左键指定第一个角点，或拾取构件图元</span>
    </div>
    <span class="fps">100 FPS</span>
  </footer>

  <div class="taskbar">
    <span class="orb"></span>
    <span class="tb"><i class="pk p-blue"></i></span>
    <span class="tb"><i class="pk p-green"></i></span>
    <span class="tb"><i class="pk p-yel"></i></span>
    <span class="tb"><i class="pk p-blue"></i></span>
    <span class="tb"><i class="pk p-navy"></i></span>
    <span class="tb narrow"><i class="pk p-red"></i></span>
    <span class="tb light"><i class="pk p-blue wide"></i></span>
    <span class="clock">10:32</span>
    <span class="show"></span>
  </div>
</div>
</body>
</html>
```

FILE: styles.css
```css
* { box-sizing: border-box; }
html, body { margin: 0; padding: 0; height: 100%; overflow: hidden; }
body { font: 12px/16px "Noto Sans", "Noto Sans CJK SC", sans-serif; color: #333; background: #dcdde0; }
i { font-style: normal; }
.defs { position: absolute; }
.icon-text { font: bold 5px "Liberation Sans", sans-serif; fill: #3d8fdc; }
.icon-text-o { font: bold 7px "Liberation Sans", sans-serif; fill: #f08a24; }
.icon-text-b { font: bold 7px "Liberation Sans", sans-serif; fill: #3d8fdc; }
.app { width: 1920px; height: 1048px; display: flex; flex-direction: column; overflow: hidden; }

.ic { width: 20px; height: 20px; flex: none; display: block; }
.caret { display: inline-block; width: 0; height: 0; border: 3px solid transparent; border-top: 4px solid #555; border-bottom: 0; flex: none; }
.caret.dim { border-top-color: #bbb; }

/* top */
.top { position: relative; height: 44px; flex: none; background: #fff; }
.logo { position: absolute; left: 9px; top: 8px; width: 29px; height: 28px; border-radius: 6px; background: linear-gradient(#3a8fe8, #0d55c4); color: #fff; font: bold 24px/28px "Liberation Sans", sans-serif; text-align: center; box-shadow: inset 0 1px 2px #9cc8f5; }
.title-row { height: 24px; display: grid; grid-template-columns: 1fr auto 1fr; align-items: center; }
.qat { display: flex; align-items: center; padding-left: 53px; }
.q { width: 18px; height: 18px; margin-right: 5px; }
.qc { margin: 0 5px 0 -1px; }
.qmore { width: 7px; height: 7px; margin-left: -1px; border-top: 1px solid #555; border-bottom: 3px double #555; }
.app-title { color: #333; }
.winctl { display: flex; justify-content: flex-end; gap: 24px; padding-right: 13px; }
.wbtn { width: 12px; height: 12px; }
.tab-row { display: flex; height: 20px; padding-left: 50px; align-items: stretch; }
.tab { padding: 0 13px; line-height: 20px; color: #444; white-space: nowrap; }
.tab.active { background: #5daaf4; color: #fff; border-radius: 2px 2px 0 0; }
.top-right { margin-left: auto; padding-right: 6px; display: flex; align-items: flex-start; }
.top-search { width: 150px; height: 19px; border: 1px solid #c4c8cc; display: flex; align-items: center; justify-content: space-between; padding: 0 3px; color: #999; }
.mag { width: 13px; height: 13px; }
.top-icons { display: flex; align-items: center; height: 19px; gap: 9px; padding-left: 3px; }
.ti { width: 17px; height: 17px; }
.help { display: flex; align-items: center; gap: 1px; width: 18px; margin-left: -4px; color: #888; font-size: 14px; }
.shirt { margin-left: 2px; }

/* ribbon */
.ribbon { height: 109px; flex: none; display: flex; background: linear-gradient(#fff 45%, #e9ecee); border-top: 1px solid #d8d9db; border-bottom: 1px solid #9a9c9e; box-shadow: 0 1px 1px #aaa; position: relative; }
.group { display: flex; flex-direction: column; padding-top: 5px; position: relative; flex: none; }
.group::after { content: ""; position: absolute; right: 0; top: 2px; bottom: 3px; width: 1px; background: #cfd3d6; box-shadow: 1px 0 0 #fff; }
.g1 { width: 58px; } .g2 { width: 157px; } .g3 { width: 157px; } .g4 { width: 241px; } .g5 { width: 172px; }
.g6 { width: 156px; } .g7 { width: 273px; } .g8 { width: 102px; } .g9 { width: 160px; }
.g1 .group-body { padding-left: 8px; }
.g6 .group-body, .g7 .group-body { padding-left: 8px; }
.g9 .group-body { padding-left: 6px; }
.group-body { display: flex; height: 78px; padding-left: 7px; flex: none; }
.group-label { height: 22px; line-height: 22px; text-align: center; display: flex; justify-content: center; align-items: center; gap: 6px; color: #333; }
.group-label.drop { padding-top: 4px; }
.big { width: 60px; margin-right: 2px; display: flex; flex-direction: column; align-items: center; flex: none; }
.big span { line-height: 16px; margin-top: 7px; white-space: nowrap; }
.bigic { width: 34px; height: 34px; margin-top: 2px; flex: none; display: block; }
.sel-big { width: 43px; margin-right: 0; background: #c9dcf2; }
.sel-big .bigic { width: 30px; height: 30px; margin-top: 4px; }
.sel-big span { margin-top: 9px; }
.col { display: flex; flex-direction: column; flex: none; }
.w84 { width: 84px; } .w109 { width: 109px; }
.item { height: 26px; display: flex; align-items: center; gap: 1px; white-space: nowrap; }
.item .caret { margin-left: 6px; }
.item.off { color: #c4c4c4; }
.item.on { width: 83px; height: 24px; margin-bottom: 2px; background: #c9dcf2; }

/* selects */
.select-bar { height: 30px; flex: none; display: flex; gap: 6px; align-items: center; padding: 2px 0 0 3px; background: #c9cbcf; border-bottom: 1px solid #9fa1a4; }
.sel { width: 99px; height: 22px; background: #fff; border: 1px solid #d4d6d8; border-radius: 2px; display: flex; align-items: center; justify-content: space-between; padding: 0 4px 0 3px; }
.sel span { white-space: nowrap; overflow: hidden; }
.sel.dis { color: #999; }
.sel.wide { width: 150px; }

/* main */
.main { flex: 1; min-height: 0; display: flex; background: #dcdde0; }
.panel { border: 1px solid #c4c6ca; border-top: 0; background: #eee; display: flex; flex-direction: column; position: relative; }
.strip { height: 11px; flex: none; background: #d3d5d9; text-align: right; font: bold 11px/11px "Liberation Sans", sans-serif; color: #9a9c9f; padding-right: 4px; border-bottom: 1px solid #c4c6ca; }
.ptitle { height: 22px; flex: none; padding-left: 8px; line-height: 23px; color: #666; border-bottom: 1px solid #c4c6ca; }
.nav { width: 162px; flex: none; }
.nav-tools { height: 31px; flex: none; display: flex; align-items: center; gap: 2px; padding-left: 0; border-bottom: 1px solid #c4c6ca; }
.nav-tree { flex: 1; background: #fff; padding-top: 5px; }
.nrow { height: 23px; margin-bottom: 3px; display: flex; align-items: center; gap: 1px; padding-left: 3px; white-space: nowrap; }
.nrow.child { margin-left: 41px; padding-left: 1px; gap: 4px; }
.nrow.cur { background: #c9dcf2; }
.hscroll { height: 8px; border-radius: 4px; background: #ccc; flex: none; }
.nav-scroll { position: absolute; left: 11px; right: 13px; bottom: 2px; }

.mid { width: 284px; margin-left: 4px; flex: none; display: flex; flex-direction: column; gap: 4px; }
.list { height: 519px; flex: none; }
.tools { height: 29px; flex: none; display: flex; align-items: center; padding-left: 1px; }
.tools.first { height: 31px; padding-top: 2px; }
.list-search { height: 19px; flex: none; display: flex; align-items: center; justify-content: space-between; padding: 0 6px 0 3px; background: #fff; color: #999; border-top: 1px solid #c4c6ca; border-bottom: 1px solid #c4c6ca; }
.tool { display: flex; align-items: center; gap: 2px; white-space: nowrap; flex: none; }
.tool .caret { margin-left: 7px; }
.tool.off { color: #bbb; }
.t68 { width: 68px; } .t58 { width: 58px; } .t61 { width: 61px; }
.list-tree { flex: 1; background: #fff; padding-top: 0; overflow: hidden; }
.lrow { height: 21px; line-height: 21px; white-space: nowrap; overflow: hidden; display: flex; align-items: center; }
.l1 { padding-left: 10px; } .l2 { padding-left: 30px; }
.l3 { margin-left: 60px; padding-left: 3px; }
.lrow.cur { background: #c9dcf2; }
.tri { width: 0; height: 0; margin-right: 6px; border-left: 7px solid transparent; border-bottom: 7px solid #444; }
.list-scroll { position: absolute; left: 12px; right: 6px; bottom: 3px; background: #ccc; }

.props { flex: 1; min-height: 0; }
.props-body { flex: 1; display: flex; align-items: flex-start; padding-top: 2px; background: linear-gradient(#fff, #fff) 0 0 / 100% 249px no-repeat, #eee; }
.grid { border-collapse: collapse; table-layout: fixed; }
.grid th, .grid td { border: 1px solid #ccced1; padding: 0 3px; font-weight: 400; white-space: nowrap; overflow: hidden; }
.grid th { text-align: center; background: #eee; color: #444; height: 17px; line-height: 15px; }
.grid th.hot { background: #7db9f8; color: #fff; font-weight: 700; }
.grid td { background: #fff; height: 21px; line-height: 19px; }
.grid td.n { background: #eee; text-align: center; }
.grid td.hotn { background: #7db9f8; color: #fff; font-weight: 700; }
.grid td.blue { color: #2a5de8; }
.grid td.cc { text-align: center; padding: 0 2px 0 0; }
.ptable { width: 266px; }
.c-n { width: 21px; } .c-name { width: 81px; } .c-val { width: 123px; } .c-ext { width: 41px; }
.ptable td.edit { outline: 2px solid #777; outline-offset: -2px; }
.vscroll { width: 8px; height: 142px; margin: 10px 0 0 5px; border-radius: 4px; background: #ccc; }
.cb { display: inline-block; width: 14px; height: 14px; border: 1px solid #888; border-radius: 3px; background: #fff; vertical-align: middle; }
.cb.on { border-color: #5aa7f8; background: #5aa7f8; position: relative; }
.cb.on::after { content: ""; position: absolute; left: 3px; top: 2px; width: 6px; height: 3px; border-left: 2px solid #fff; border-bottom: 2px solid #fff; transform: rotate(-45deg); }

.split { width: 5px; flex: none; display: flex; align-items: center; justify-content: flex-start; padding-left: 1px; }
.grip { width: 4px; height: 96px; background: #5f6b78; }
.right-split { width: 6px; }
.canvas { width: 1100px; flex: none; position: relative; margin: 3px 0 1px; background: #000; overflow: hidden; }
.cad { display: block; }
.red, .pur, .brn, .dred, .mag, .blu, .gry, .d1, .d2, .d3 { fill: none; stroke-width: 1; vector-effect: non-scaling-stroke; }
.red { stroke: #f00; } .pur { stroke: #7a2cf0; } .brn { stroke: #a0584e; } .dred { stroke: #a00000; }
.mag { stroke: #e030e0; stroke-width: 1.300; } .blu { stroke: #1670ff; } .gry { stroke: #999; }
.hatch { fill: none; stroke: #7c7c7c; stroke-width: 7; stroke-dasharray: 1.200 .8; vector-effect: non-scaling-stroke; }
.hatch-g { fill: none; stroke: #60c060; stroke-width: 7; stroke-dasharray: 1.200 .8; vector-effect: non-scaling-stroke; }
.mag-t { fill: none; stroke: #e020e0; } .dred-t { fill: none; stroke: #a00000; } .red-t { fill: none; stroke: #f00; }
.yc { fill: none; stroke: #ff0; stroke-width: 1.300; vector-effect: non-scaling-stroke; }
.gc { fill: none; stroke: #5fef00; stroke-width: 1; vector-effect: non-scaling-stroke; }
.sheet { fill: #009900; }
.sheet-edge { fill: none; stroke: #e4ff00; stroke-width: 2; }
.lime { fill: none; stroke: #66f000; stroke-width: 2; }
.d1 { stroke: #6c8600; } .d2 { stroke: #3fb000; } .d3 { stroke: #70a070; stroke-width: 1.200; }
.bright { fill: none; stroke: #66f000; stroke-width: 1; vector-effect: non-scaling-stroke; }
.tri-red { fill: #800000; }
.tri-dim { fill: #2e8800; }
.t-dim { font: 11px "Liberation Sans Narrow", "Liberation Sans", sans-serif; fill: #3f9000; }
.t-red { font: 11px "Liberation Sans Narrow", "Liberation Sans", sans-serif; fill: #800000; }
.t-bright { font: 10px "Liberation Sans", sans-serif; fill: #f00; }
.t-yel { font: 700 9px "Noto Sans CJK SC", sans-serif; fill: #ff0; }
.ax-g { stroke: #00c000; stroke-width: 2; } .ax-gf { fill: #00c000; }
.ax-r { stroke: #ff1010; stroke-width: 2; } .ax-rf { fill: #ff1010; }
.ax-b { fill: #1030e0; }
.viewcube { position: absolute; left: 1066px; top: 2px; width: 31px; height: 225px; background: #4a4d51; border: 1px solid #5c6064; border-radius: 3px; }
.viewcube svg { display: block; margin: -1px; }
.cube-t { font: 7px "Liberation Sans", sans-serif; fill: #b9bcbf; }

.right { width: 359px; flex: none; display: flex; flex-direction: column; gap: 5px; }
.dwg { height: 564px; flex: none; }
.dwg-body { flex: 1; padding: 1px 0 0 1px; border-top: 2px solid #eee; background: linear-gradient(#eee, #eee) 0 0 / 100% 18px no-repeat, linear-gradient(#eee, #eee) 0 0 / 22px 100% no-repeat, #fff; }
.dtable { width: 304px; }
.d-n { width: 20px; } .d-name { width: 111px; } .d-s { width: 51px; } .d-f { width: 71px; } .d-l { width: 51px; }
.dtable .r1 td { height: 20px; }
.dtable .r2 td { height: 21px; }
.tree-cell { position: relative; padding-left: 20px !important; overflow: visible !important; }
.minus { position: absolute; left: 3px; top: 3px; width: 13px; height: 13px; border: 1px solid #666; border-radius: 2px; background: linear-gradient(#666, #666) center / 7px 1px no-repeat, #fff; }
.dtable .r2 td:not(.n) { background: #008000; color: #0c5a0c; }
.dtable td.ctr { text-align: center; }
.dtable td.model { outline: 2px solid #666; outline-offset: -2px; padding-left: 31px; position: relative; overflow: visible; }
.dtable td.model::before { content: ""; position: absolute; left: 9px; top: -9px; width: 16px; height: 18px; border-left: 1px solid #bbb; border-bottom: 1px solid #fff; }
.side-tab { position: absolute; right: -1px; top: 473px; width: 10px; height: 60px; background: #4b5159; border-radius: 3px 0 0 3px; padding: 7px 0 0 4px; }
.side-tab i { display: block; width: 4px; height: 46px; background: repeating-linear-gradient(#1d2126 0 1px, transparent 1px 2px), linear-gradient(#6e747c 0 48%, #c8d64a 48% 72%, #44d0a8 72%); }
.layers { flex: 1; min-height: 0; }
.layer-tools { height: 31px; padding-top: 1px; flex: none; display: flex; align-items: center; padding-left: 4px; gap: 14px; color: #3c4a5a; }
.layer-tools span { width: 72px; white-space: nowrap; }
.layer-body { flex: 1; border-top: 5px solid #f4f4f4; background: linear-gradient(#eee, #eee) 0 0 / 100% 18px no-repeat, #fff; }
.ltable { width: 222px; }
.e-a { width: 36px; } .e-b { width: 35px; } .e-c { width: 151px; }
.ltable td { height: 26px; padding-left: 3px; }
.ltable .cb { margin: 6px 3px 0 0; }
.play { display: inline-block; width: 0; height: 0; position: relative; border-left: 7px solid #bbb; border-top: 5px solid transparent; border-bottom: 5px solid transparent; vertical-align: 3px; }
.play::after { content: ""; position: absolute; left: -6px; top: -3px; border-left: 4px solid #fff; border-top: 3px solid transparent; border-bottom: 3px solid transparent; }

/* status */
.status { height: 31px; padding-top: 2px; flex: none; display: flex; align-items: center; background: #dcdde0; color: #444; }
.st { flex: none; white-space: nowrap; }
.st-xy { width: 265px; padding-left: 2px; }
.st-fh { width: 83px; } .st-bh { width: 104px; } .st-z { width: 102px; }
.st-tools { display: flex; align-items: center; gap: 3px; }
.sbtn { height: 25px; display: flex; align-items: center; justify-content: center; gap: 2px; background: #cfd0d3; border: 1px solid #a3a5a8; flex: none; }
.sbtn svg { width: 18px; height: 18px; }
.s1 { width: 25px; } .s2 { width: 36px; }
.sbtn.act { background: #fff; border-color: #3d9bf0; }
.sbtn.dis { background: #d8d9db; }
.txt { color: #555; } .b1 { width: 73px; } .b2 { width: 61px; }
.bright-l { margin-left: 3px; white-space: nowrap; }
.slider { display: flex; align-items: center; margin-left: 10px; }
.sl-b { width: 12px; height: 12px; border: 1px solid #aaa; border-radius: 50%; background: #f4f4f4; font: bold 10px/10px "Liberation Sans", sans-serif; text-align: center; color: #555; flex: none; }
.sl-b.plus { margin-left: 6px; }
.track { width: 40px; height: 3px; margin: 0 3px; background: #f2f2f2; border: 1px solid #c6c6c6; border-width: 1px 0; position: relative; display: block; flex: none; }
.thumb { position: absolute; right: -4px; top: -8px; width: 9px; height: 17px; background: linear-gradient(#fff, #c8c8c8); border: 1px solid #999; border-radius: 2px; }
.hint { margin-left: 5px; white-space: nowrap; color: #444; }
.fps { margin-left: auto; padding-right: 37px; white-space: nowrap; }

/* taskbar */
.taskbar { height: 8px; flex: none; display: flex; gap: 6px; overflow: hidden; position: relative; border-top: 1px solid #111; background: linear-gradient(90deg, #3a3626 0 500px, #8f7e3e 560px, #6a5f36 1100px, #4a4630 1700px, #3e3b2c); }
.orb { width: 70px; height: 8px; flex: none; background: #2b2a22; }
.tb { width: 57px; height: 8px; flex: none; position: relative; background: linear-gradient(#c9c9bd, #8c8c7c); border: 1px solid #55554a; border-bottom: 0; display: flex; justify-content: center; }
.tb.narrow { width: 53px; }
.tb.light { background: #d8dad8; margin-left: 3px; }
.pk { width: 20px; height: 5px; margin-top: 2px; border-radius: 8px 8px 0 0; }
.pk.wide { width: 30px; }
.p-blue { background: #2a86e0; } .p-green { background: #f0f0f0; border-top: 1px solid #50b040; }
.p-yel { background: #c0b050; } .p-navy { background: #1a60b0; border-radius: 1px; }
.p-red { background: linear-gradient(90deg, #e8a0a0, #fff); border-radius: 0; width: 30px; }
.clock { position: absolute; right: 40px; top: 2px; color: #fff; font-size: 12px; line-height: 14px; }
.show { position: absolute; right: 0; top: 0; width: 14px; height: 8px; background: #8a8a80; border: 1px solid #bbb; }
```
